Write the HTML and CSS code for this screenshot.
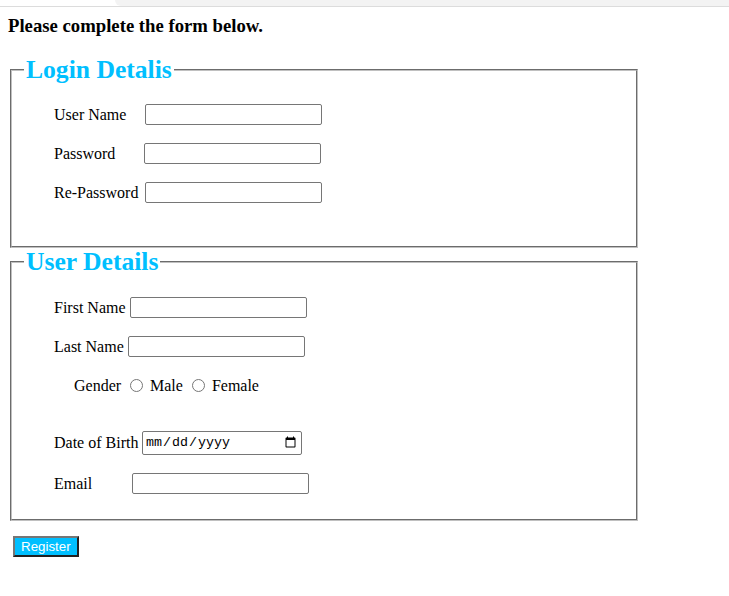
FILE: index.html
```html
<!DOCTYPE html>
<html lang="en">
<head>
<meta charset="utf-8">
<title>Registration</title>
<link rel="stylesheet" href="styles.css">
</head>
<body>
<div class="topbar"><div class="topbar-tab"></div></div>
<div class="page">
  <h3 class="title">Please complete the form below.</h3>
  <form class="form">
    <fieldset class="box box-login">
      <legend class="legend">Login Detalis</legend>
      <div class="row first">
        <label class="lbl w-user" for="un">User Name</label>
        <input class="txt" type="text" id="un">
      </div>
      <div class="row">
        <label class="lbl w-pass" for="pw">Password</label>
        <input class="txt" type="password" id="pw">
      </div>
      <div class="row">
        <label class="lbl w-repass" for="rpw">Re-Password</label>
        <input class="txt" type="password" id="rpw">
      </div>
    </fieldset>
    <fieldset class="box box-user">
      <legend class="legend">User Details</legend>
      <div class="row first">
        <label class="lbl w-first" for="fn">First Name</label>
        <input class="txt" type="text" id="fn">
      </div>
      <div class="row">
        <label class="lbl w-last" for="ln">Last Name</label>
        <input class="txt" type="text" id="ln">
      </div>
      <div class="row gender">
        <span class="lbl w-gender">Gender</span>
        <input class="radio" type="radio" name="g" id="gm">
        <label class="rlbl male" for="gm">Male</label>
        <input class="radio" type="radio" name="g" id="gf">
        <label class="rlbl" for="gf">Female</label>
      </div>
      <div class="row dob">
        <label class="lbl w-dob" for="dob">Date of Birth</label>
        <input class="date" type="date" id="dob">
      </div>
      <div class="row">
        <label class="lbl w-email" for="em">Email</label>
        <input class="txt" type="email" id="em">
      </div>
    </fieldset>
    <div class="actions">
      <button class="btn" type="button">Register</button>
    </div>
  </form>
</div>
</body>
</html>
```
FILE: styles.css
```css
html, body {
  margin: 0;
  padding: 0;
  background: #ffffff;
}
body {
  font-family: "Liberation Serif", "Times New Roman", serif;
  font-size: 16px;
  color: #000;
}
.topbar {
  display: flex;
  height: 6px;
  border-bottom: 1px solid #dcdcdc;
}
.topbar-tab {
  flex: 1;
  margin-left: 115px;
  background: #f3f3f3;
  border-bottom-left-radius: 8px;
}
.page {
  padding: 0 8px;
}
.title {
  margin: 8px 0 19px;
  font-size: 18.72px;
  line-height: 22px;
  font-weight: bold;
}
.form {
  margin: 0;
}
.box {
  width: 600px;
  margin: 0 2px;
  padding: 0 12px 43px;
  border: 2px groove #c0c0c0;
}
.box-user {
  padding-bottom: 25px;
}
.legend {
  padding: 0 2px;
  color: #00bfff;
  font-size: 25.6px;
  line-height: 28px;
  font-weight: bold;
}
.row {
  display: flex;
  align-items: center;
  height: 21px;
  margin-top: 18px;
  padding-left: 30px;
}
.row.first {
  margin-top: 20px;
}
.box-user .row.first {
  margin-top: 21px;
}
.row.gender {
  padding-left: 50px;
}
.row.dob {
  height: 24px;
  margin-top: 35px;
}
.lbl {
  flex: none;
  line-height: 18px;
  white-space: nowrap;
}
.w-user { width: 91px; }
.w-pass { width: 90px; }
.w-repass { width: 91px; }
.w-first { width: 76px; }
.w-last { width: 74px; }
.w-gender { width: 56px; }
.w-dob { width: 88px; }
.w-email { width: 78px; }
.txt {
  box-sizing: border-box;
  width: 177px;
  height: 21px;
  margin: 0;
  padding: 1px 2px;
  border: 1px solid #767676;
  border-radius: 2px;
  font-family: "Liberation Sans", Arial, sans-serif;
  font-size: 13.33px;
  background: #fff;
}
.date {
  box-sizing: border-box;
  width: 160px;
  height: 24px;
  margin: 0;
  padding: 1px 2px;
  border: 1px solid #767676;
  border-radius: 2px;
  font-family: "Liberation Mono", "DejaVu Sans Mono", monospace;
  font-size: 13.33px;
  background: #fff;
}
.radio {
  width: 13px;
  height: 13px;
  margin: 0;
  flex: none;
}
.rlbl {
  margin-left: 7px;
  line-height: 18px;
}
.rlbl.male {
  margin-right: 9px;
}
.actions {
  padding: 15px 0 0 5px;
}
.btn {
  height: 21px;
  padding: 1px 6px;
  margin: 0;
  background: #00bfff;
  color: #ffffff;
  border: 2px outset #767676;
  font-family: "Liberation Sans", Arial, sans-serif;
  font-size: 13.33px;
  line-height: 15px;
}
```
